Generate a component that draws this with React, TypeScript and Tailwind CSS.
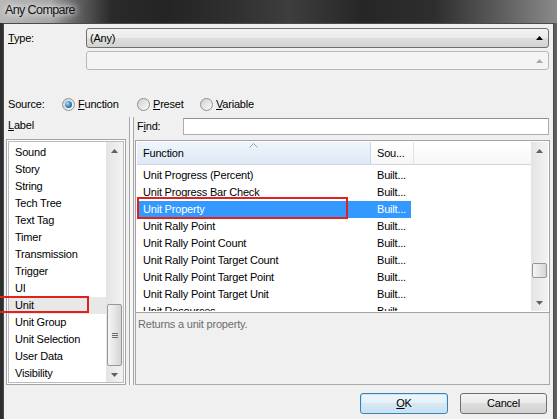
import React from 'react';

const leftItems = [
  'Sound',
  'Story',
  'String',
  'Tech Tree',
  'Text Tag',
  'Timer',
  'Transmission',
  'Trigger',
  'UI',
  'Unit',
  'Unit Group',
  'Unit Selection',
  'User Data',
  'Visibility',
];

const functions = [
  'Unit Progress (Percent)',
  'Unit Progress Bar Check',
  'Unit Property',
  'Unit Rally Point',
  'Unit Rally Point Count',
  'Unit Rally Point Target Count',
  'Unit Rally Point Target Point',
  'Unit Rally Point Target Unit',
  'Unit Resources',
];

const Arrow = ({ down = false, color = '#606060' }: { down?: boolean; color?: string }) => (
  <svg width="7" height="4" viewBox="0 0 7 4">
    <path d={down ? 'M0 0h7L3.5 4z' : 'M0 4h7L3.5 0z'} fill={color} />
  </svg>
);

const ScrollBar = ({ gap, thumb, grip }: { gap: string; thumb: string; grip?: boolean }) => (
  <div className="w-[17px] h-full shrink-0 flex flex-col bg-[linear-gradient(90deg,#e4e4e4,#f3f3f3)]">
    <div className="h-[17px] shrink-0 flex items-center justify-center">
      <Arrow />
    </div>
    <div className="flex-1 flex flex-col px-[1px]">
      <div className={`${gap} shrink-0`} />
      <div
        className={`${thumb} shrink-0 rounded-[2px] border border-[#979797] bg-[linear-gradient(90deg,#f4f4f4,#e6e6e6_50%,#d5d5d5)] flex flex-col items-center justify-center gap-[1px]`}
      >
        {grip && (
          <>
            <div className="w-[6px] h-px bg-[#6a6a6a]" />
            <div className="w-[6px] h-px bg-[#6a6a6a]" />
            <div className="w-[6px] h-px bg-[#6a6a6a]" />
          </>
        )}
      </div>
    </div>
    <div className="h-[17px] shrink-0 flex items-center justify-center">
      <Arrow down />
    </div>
  </div>
);

const Radio = ({ checked, first, rest, width }: { checked?: boolean; first: string; rest: string; width: string }) => (
  <div className={`flex items-center ${width}`}>
    <span className="w-[13px] h-[13px] rounded-full border border-[#8e8f8f] bg-[linear-gradient(135deg,#cfd1d4,#fafafa)] flex items-center justify-center">
      {checked && (
        <span className="w-[7px] h-[7px] rounded-full bg-[radial-gradient(circle_at_35%_35%,#a8e0fa,#2f7fb8_55%,#114a7a)]" />
      )}
    </span>
    <span className="ml-[3px]">
      <span className="underline underline-offset-1">{first}</span>
      {rest}
    </span>
  </div>
);

const App: React.FC = () => {
  return (
    <div className="relative w-[557px] h-[419px] overflow-hidden flex flex-col bg-[linear-gradient(90deg,#2e2e2e,#2a2a2a_50%,#5e5e5e)] font-['Liberation_Sans',Arial,sans-serif] text-[11px] tracking-[-0.2px] text-black">
      {/* title bar */}
      <div className="h-[23px] shrink-0 flex items-center pb-[2px] bg-[linear-gradient(90deg,#b8b8b8_0%,#a4a4a4_9%,#6a6a6a_13%,#2a2a2a_20%,#242424_30%,#303030_42%,#3e3e3e_52%,#262626_65%,#2e2e2e_78%,#5e5e5e_90%,#8a8a8a_100%)]">
        <span className="pl-[5px] text-[12.5px] tracking-[-0.6px] text-[#141414] [text-shadow:0_0_6px_#fff,0_0_10px_#fff]">
          Any Compare
        </span>
      </div>

      {/* frame */}
      <div className="flex-1 flex px-[3px]">
        <div className="flex-1 flex flex-col bg-[#f0f0f0] border border-b-0 border-[#4a4a4a]">
          {/* type row */}
          <div className="mt-[4px] flex items-center h-[20px]">
            <div className="w-[82px] pl-[4px]">
              <span className="underline underline-offset-1">T</span>ype:
            </div>
            <div className="w-[463px] h-[20px] rounded-[3px] border border-[#707070] bg-[linear-gradient(#f3f3f3_0%,#ebebeb_50%,#dedede_50%,#d2d2d2_100%)] flex items-center justify-between pl-[3px] pr-[5px]">
              <span>(Any)</span>
              <Arrow color="#000" />
            </div>
          </div>
          <div className="mt-[3px] ml-[82px] w-[463px] h-[19px] rounded-[3px] border border-[#b4b8bb] bg-[#f4f4f4] flex items-center justify-end pr-[5px]">
            <Arrow color="#a8a8a8" />
          </div>

          {/* source row */}
          <div className="mt-[26px] h-[16px] flex items-center pl-[4px]">
            <div className="w-[54px]">Source:</div>
            <Radio checked first="F" rest="unction" width="w-[75px]" />
            <Radio first="P" rest="reset" width="w-[63px]" />
            <Radio first="V" rest="ariable" width="w-[80px]" />
          </div>

          {/* lower area */}
          <div className="mt-[5px] h-[268px] flex">
            {/* left column */}
            <div className="w-[124px] flex flex-col">
              <div className="h-[16px] flex items-center pl-[4px]">
                <span className="underline underline-offset-1">L</span>abel
              </div>
              <div className="mt-[6px] ml-[2px] w-[120px] h-[246px] border border-[#a3a3a3] bg-white p-px">
                <div className="h-full border border-[#bcbcbc] flex">
                  <div className="flex-1 pt-[2px]">
                    {leftItems.map((it) => (
                      <div
                        key={it}
                        className={`h-[17px] leading-[17px] pl-[6px] ${it === 'Unit' ? 'bg-[#e8e8e8]' : ''}`}
                      >
                        {it}
                      </div>
                    ))}
                  </div>
                  <ScrollBar gap="h-[145px]" thumb="h-[62px]" grip />
                </div>
              </div>
            </div>

            {/* splitter */}
            <div className="w-[7px] flex justify-center">
              <div className="w-[5px] h-full border-x border-[#a6a6a6] bg-[#f7f7f7]" />
            </div>

            {/* right column */}
            <div className="w-[415px] flex flex-col">
              <div className="h-[18px] shrink-0 flex items-center">
                <div className="w-[48px] pl-[2px]">
                  F<span className="underline underline-offset-1">i</span>nd:
                </div>
                <div className="flex-1 mr-[1px] h-[17px] mt-[1px] bg-white border border-[#abadb3] border-t-[#8e8f8f]" />
              </div>

              <div className="mt-[5px] h-[173px] shrink-0 border border-[#a3a3a3] bg-white p-px">
                <div className="h-full flex">
                  <div className="flex-1 flex flex-col overflow-hidden">
                    {/* header */}
                    <div className="h-[23px] shrink-0 flex border-b border-[#d5d5d5]">
                      <div className="relative w-[234px] pl-[6px] pt-[1px] flex items-center border-r border-[#c4d6e8] bg-[linear-gradient(#eef5fc,#dde9f6)]">
                        Function
                        <svg
                          className="absolute left-[112px] top-[1px]"
                          width="9"
                          height="5"
                          viewBox="0 0 9 5"
                        >
                          <path d="M0.5 4.5L4.5 0.5L8.5 4.5" stroke="#8da2b8" fill="none" />
                        </svg>
                      </div>
                      <div className="w-[43px] pl-[6px] pt-[1px] flex items-center border-r border-[#e2e3e4] bg-[linear-gradient(#ffffff,#f5f6f7)]">
                        Sou...
                      </div>
                      <div className="flex-1 bg-[linear-gradient(#ffffff,#f5f6f7)]" />
                    </div>
                    {/* rows */}
                    <div className="pt-[2px] shrink-0">
                      {functions.map((f) => {
                        const sel = f === 'Unit Property';
                        return (
                          <div
                            key={f}
                            className={`ml-[2px] w-[272px] h-[17px] leading-[17px] flex ${sel ? 'bg-[#3399ff] text-white' : ''}`}
                          >
                            <div className="w-[231px] pl-[4px] whitespace-nowrap">{f}</div>
                            <div className="w-[41px] pl-[7px] whitespace-nowrap">Built...</div>
                          </div>
                        );
                      })}
                    </div>
                  </div>
                  <ScrollBar gap="h-[104px]" thumb="h-[15px]" />
                </div>
              </div>

              <div className="h-[72px] shrink-0 border border-t-0 border-[#a9a9a9] bg-[#f0f0f0] pl-[2px] pt-[3px] text-[#6d6d6d]">
                Returns a unit property.
              </div>
            </div>
          </div>

          {/* buttons */}
          <div className="mt-[8px] h-[21px] flex justify-end gap-[12px] pr-[6px]">
            <button className="w-[88px] h-[21px] rounded-[3px] border border-[#3c7fb1] shadow-[inset_0_0_0_1px_#c8e8fa] bg-[linear-gradient(#eef6fb_0%,#e5f0f8_50%,#d6e8f4_50%,#c9e0f1_100%)] flex items-center justify-center">
              <span className="underline underline-offset-1">O</span>K
            </button>
            <button className="w-[87px] h-[21px] rounded-[3px] border border-[#707070] bg-[linear-gradient(#f3f3f3_0%,#ebebeb_50%,#dedede_50%,#d2d2d2_100%)] flex items-center justify-center">
              Cancel
            </button>
          </div>
        </div>
      </div>

      {/* red annotation boxes */}
      <div className="absolute left-[-3px] top-[296px] w-[92px] h-[17px] border-2 border-[#e3211c]" />
      <div className="absolute left-[137px] top-[197px] w-[211px] h-[22px] border-2 border-[#e3211c]" />
    </div>
  );
};

export default App;
